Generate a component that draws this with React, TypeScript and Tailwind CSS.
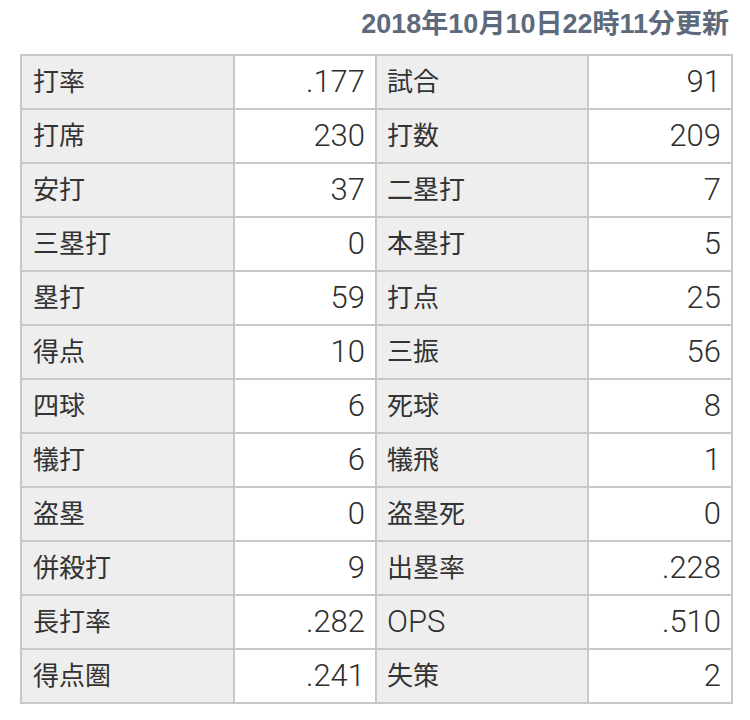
import React from "react";

const rows: [string, string, string, string][] = [
  ["打率", ".177", "試合", "91"],
  ["打席", "230", "打数", "209"],
  ["安打", "37", "二塁打", "7"],
  ["三塁打", "0", "本塁打", "5"],
  ["塁打", "59", "打点", "25"],
  ["得点", "10", "三振", "56"],
  ["四球", "6", "死球", "8"],
  ["犠打", "6", "犠飛", "1"],
  ["盗塁", "0", "盗塁死", "0"],
  ["併殺打", "9", "出塁率", ".228"],
  ["長打率", ".282", "OPS", ".510"],
  ["得点圏", ".241", "失策", "2"],
];

function Txt({ s }: { s: string }) {
  const latin = /^[A-Za-z0-9.]+$/.test(s);
  return latin ? (
    <span
      className="relative top-[2px] text-[31px] font-light text-[#2e2e2e]"
      style={{ fontFamily: 'Roboto, "Liberation Sans", sans-serif' }}
    >
      {s}
    </span>
  ) : (
    <span className="text-[26px]" style={{ fontFamily: '"Noto Sans CJK JP", sans-serif' }}>
      {s}
    </span>
  );
}

export default function App() {
  return (
    <div className="w-[750px] h-[720px] bg-white text-[#333333]">
      <div className="flex justify-end pr-[21px] pt-[6px] h-[54px]">
        <div
          className="text-[27px] font-bold text-[#5c6a7c] leading-[36px]"
          style={{ fontFamily: '"Liberation Sans", "Noto Sans CJK JP", sans-serif' }}
        >
          2018年10月10日22時11分更新
        </div>
      </div>
      <div className="pl-[20px]">
        <table className="border-collapse w-[711px] table-fixed">
          <colgroup>
            <col className="w-[213px]" />
            <col className="w-[142px]" />
            <col className="w-[212px]" />
            <col className="w-[144px]" />
          </colgroup>
          <tbody>
            {rows.map((r, i) => (
              <tr key={i} className="h-[54px]">
                <td className="border-2 border-[#c8c8c8] bg-[#eeeeee] pl-[11px] pr-[10px] leading-[30px]">
                  <Txt s={r[0]} />
                </td>
                <td className="border-2 border-[#c8c8c8] bg-white px-[10px] text-right leading-[30px]">
                  <Txt s={r[1]} />
                </td>
                <td className="border-2 border-[#c8c8c8] bg-[#eeeeee] pl-[10px] pr-[10px] leading-[30px]">
                  <Txt s={r[2]} />
                </td>
                <td className="border-2 border-[#c8c8c8] bg-white px-[10px] text-right leading-[30px]">
                  <Txt s={r[3]} />
                </td>
              </tr>
            ))}
          </tbody>
        </table>
      </div>
    </div>
  );
}
